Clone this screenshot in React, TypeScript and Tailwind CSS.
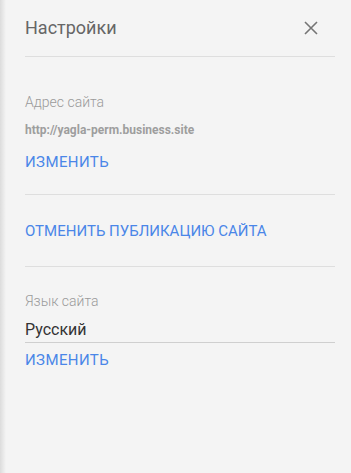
import React from "react";

export default function App() {
  return (
    <div
      className="relative w-[351px] h-[473px] bg-[#f4f4f4] overflow-hidden"
      style={{ fontFamily: "Roboto, 'Liberation Sans', sans-serif" }}
    >
      <div className="absolute left-0 top-0 bottom-0 w-[6px] bg-gradient-to-r from-[#dcdcdc] to-[#f4f4f4]" />
      <div className="pl-[25px] pr-[16px]">
        <div className="flex items-center justify-between h-[57px] border-b border-[#dedede]">
          <span className="text-[18px] text-[#666666] leading-none">Настройки</span>
          <svg width="14" height="14" viewBox="0 0 14 14" className="mr-[17px]">
            <path d="M1 1 L13 13 M13 1 L1 13" stroke="#757575" strokeWidth="1.6" />
          </svg>
        </div>
        <div className="pt-[37px] border-b border-[#dedede] pb-[24px]">
          <div className="text-[14px] font-light text-[#9a9a9a] leading-[16px]">Адрес сайта</div>
          <div className="text-[12px] font-bold text-[#9e9e9e] leading-[14px] mt-[13px]">http://yagla-perm.business.site</div>
          <div className="text-[15px] text-[#4a86e8] leading-[16px] mt-[17px] tracking-[0.4px]">ИЗМЕНИТЬ</div>
        </div>
        <div className="border-b border-[#dedede] h-[72px] flex items-center">
          <div className="text-[15px] text-[#4a86e8] leading-[16px] pt-[1px]">ОТМЕНИТЬ ПУБЛИКАЦИЮ САЙТА</div>
        </div>
        <div className="pt-[26px]">
          <div className="text-[14px] font-light text-[#9a9a9a] leading-[16px]">Язык сайта</div>
          <div className="text-[16px] text-[#333333] leading-[18px] mt-[12px] pb-[3px] border-b border-[#cfcfcf]">Русский</div>
          <div className="text-[15px] text-[#4a86e8] leading-[16px] mt-[9px] tracking-[0.4px]">ИЗМЕНИТЬ</div>
        </div>
      </div>
    </div>
  );
}
